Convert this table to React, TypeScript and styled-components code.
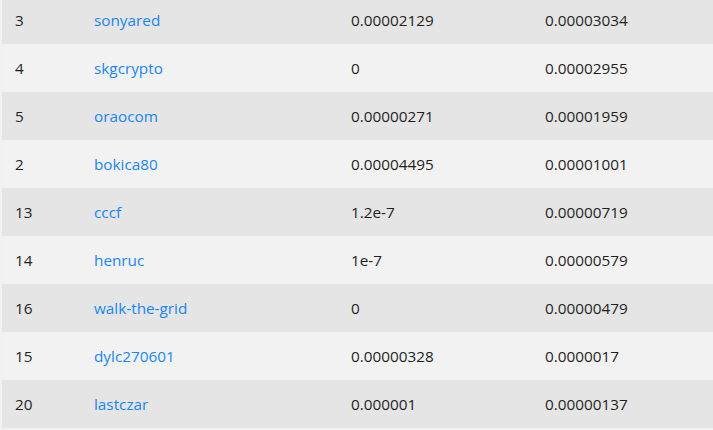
import styled, { createGlobalStyle } from "styled-components";

const GlobalStyle = createGlobalStyle`
  body {
    margin: 0;
    background: #f1f1f1;
    font-family: "Segoe UI", "Open Sans", "Noto Sans", sans-serif;
    overflow: hidden;
  }
`;

const Table = styled.div`
  margin-top: -4px;
  margin-left: 2px;
  display: flex;
  flex-direction: column;
`;

const Row = styled.div<{ $odd: boolean }>`
  display: grid;
  grid-template-columns: 79px 257px 194px 1fr;
  height: 48px;
  align-items: center;
  background: ${({ $odd }) => ($odd ? "#e5e5e5" : "#f2f2f2")};
`;

const Cell = styled.div`
  padding: 0 13px;
  font-size: 15.3px;
  color: #1f1f1f;
  white-space: nowrap;
`;

const Link = styled.a`
  color: #1a86f5;
  text-decoration: none;
  cursor: pointer;
`;

const rows = [
  ["3", "sonyared", "0.00002129", "0.00003034"],
  ["4", "skgcrypto", "0", "0.00002955"],
  ["5", "oraocom", "0.00000271", "0.00001959"],
  ["2", "bokica80", "0.00004495", "0.00001001"],
  ["13", "cccf", "1.2e-7", "0.00000719"],
  ["14", "henruc", "1e-7", "0.00000579"],
  ["16", "walk-the-grid", "0", "0.00000479"],
  ["15", "dylc270601", "0.00000328", "0.0000017"],
  ["20", "lastczar", "0.000001", "0.00000137"],
];

export default function App() {
  return (
    <>
      <GlobalStyle />
      <Table>
        {rows.map(([rank, name, a, b], i) => (
          <Row key={name} $odd={i % 2 === 0}>
            <Cell>{rank}</Cell>
            <Cell>
              <Link>{name}</Link>
            </Cell>
            <Cell>{a}</Cell>
            <Cell>{b}</Cell>
          </Row>
        ))}
      </Table>
    </>
  );
}
